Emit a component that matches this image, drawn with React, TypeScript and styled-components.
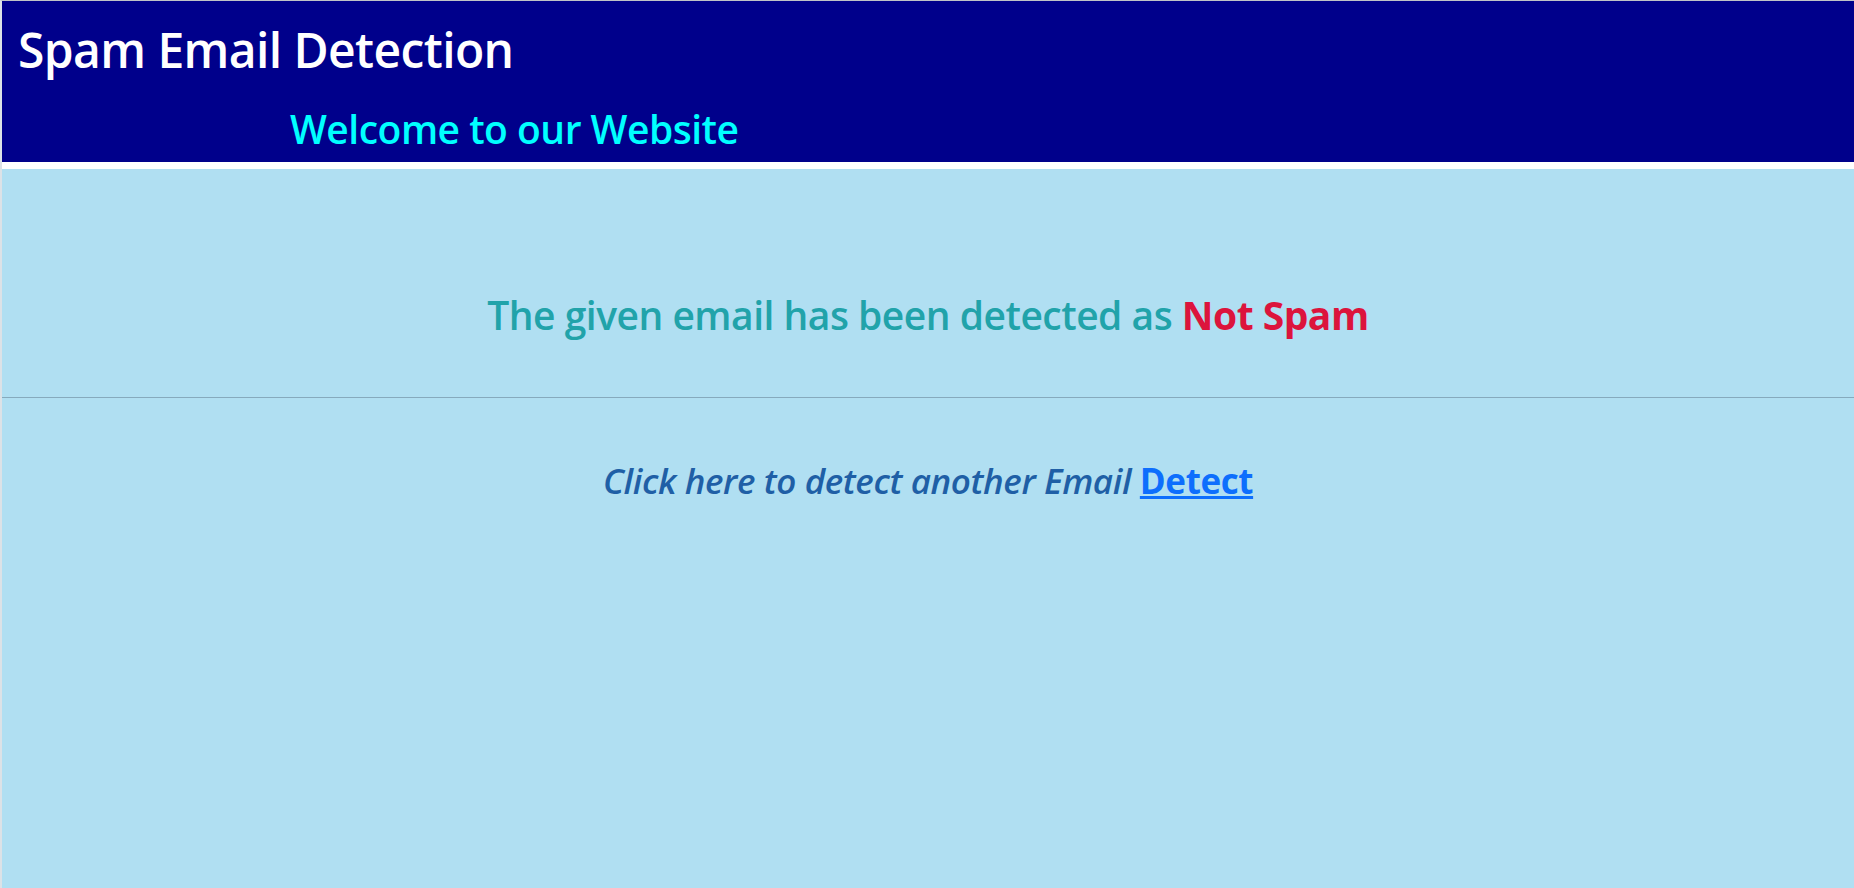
import React from 'react';
import styled, {createGlobalStyle} from 'styled-components';

const GlobalStyle = createGlobalStyle`
  html, body {
    margin: 0;
    padding: 0;
    height: 100%;
  }
  body {
    font-family: "Open Sans", "Noto Sans", sans-serif;
    background: #ffffff;
  }
  #root {
    height: 100%;
  }
`;

const App: React.FC = () => {
  return (
    <>
      <GlobalStyle/>
      <Page>
        <Header>
          <Title>Spam Email Detection</Title>
          <Welcome>Welcome to our Website</Welcome>
        </Header>
        <Main>
          <Result>
            The given email has been detected as <Verdict>Not Spam</Verdict>
          </Result>
          <Divider/>
          <Again>
            Click here to detect another Email <DetectLink href="#">Detect</DetectLink>
          </Again>
        </Main>
      </Page>
    </>
  );
};

const Page = styled.div`
  display: flex;
  flex-direction: column;
  min-height: 100vh;
  box-sizing: border-box;
  border-top: 1px solid #bfc3c7;
  border-left: 2px solid #dce2e7;
`;
const Header = styled.header`
  height: 161px;
  box-sizing: border-box;
  background: #00008b;
  padding: 14px 16px 0;
  display: flex;
  flex-direction: column;
`;
const Title = styled.h1`
  margin: 0;
  color: #ffffff;
  font-size: 48px;
  font-weight: 600;
  line-height: 70px;
  letter-spacing: -0.6px;
`;
const Welcome = styled.h2`
  margin: 12px 0 0 272px;
  color: #00ffff;
  font-size: 39px;
  font-weight: 600;
  line-height: 64px;
  letter-spacing: -0.5px;
`;
const Main = styled.main`
  flex: 1;
  margin-top: 7px;
  background: #b0dff2;
  display: flex;
  flex-direction: column;
  align-items: center;
`;
const Result = styled.h2`
  margin: 111px 0 0;
  color: #21a3aa;
  font-size: 39px;
  font-weight: 600;
  line-height: 70px;
  letter-spacing: -0.5px;
`;
const Verdict = styled.span`
  color: #dc143c;
  font-weight: 700;
`;
const Divider = styled.hr`
  align-self: stretch;
  margin: 47px 0 0;
  border: 0;
  border-top: 1px solid #86aabd;
`;
const Again = styled.h3`
  margin: 58px 0 0;
  color: #1f5fa6;
  font-size: 35px;
  font-style: italic;
  font-weight: 600;
  line-height: 50px;
  letter-spacing: -0.4px;
`;
const DetectLink = styled.a`
  color: #0d6efd;
  font-style: normal;
  font-weight: 700;
  text-decoration: underline;
`;

export default App;
